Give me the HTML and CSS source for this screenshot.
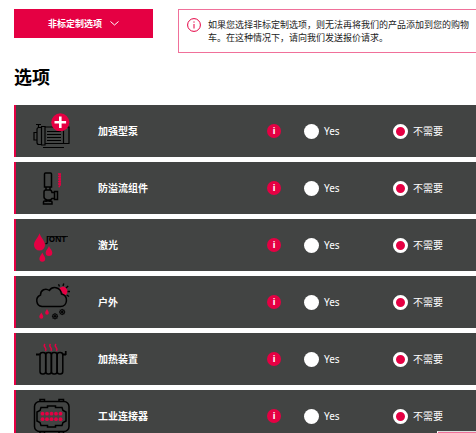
FILE: index.html
```
<!DOCTYPE html>
<html lang="zh-CN">
<head>
  <meta charset="UTF-8">
  <meta name="viewport" content="width=device-width, initial-scale=1.0">
  <title>选项</title>
  <link rel="stylesheet" href="styles.css">
</head>
<body>
  <header class="top">
    <button type="button" class="custom-btn">
      非标定制选项
      <svg class="chevron" viewBox="0 0 9 5"><path d="M.5 .5 L4.5 4 L8.5 .5"/></svg>
    </button>
    <div class="notice">
      <svg class="notice-icon" viewBox="0 0 14 14"><circle cx="7" cy="7" r="6.4"/><path d="M7 6v4.5M7 3.4v1.3"/></svg>
      <p>如果您选择非标定制选项，则无法再将我们的产品添加到您的购物车。在这种情况下，请向我们发送报价请求。</p>
    </div>
  </header>

  <main>
    <h1>选项</h1>
    <form class="options">

      <div class="option">
        <svg class="icon" viewBox="0 0 44 44">
          <path d="M4 23.5h3v7.5h-3zM7 20.5q0-2 2-2h2.5v17H9q-2 0-2-2zM8.5 18.5v-3M6 15.5h5M11.500 17.500h3.500v18.500h-3.500zM15 18h18.500v16.500H15zM33.500 18h5.500v16.500h-5.500zM17 22.500h14M17 25.500h14M17 28.500h14M17 31.500h14M13 38.500h21"/>
          <circle class="red" cx="30.300" cy="13.300" r="9"/>
          <path class="plus" d="M30.300 7.500v11.600M24.500 13.300h11.600"/>
        </svg>
        <span class="name">加强型泵</span>
        <button type="button" class="info" aria-label="加强型泵">i</button>
        <label><input type="radio" name="pump">Yes</label>
        <label><input type="radio" name="pump" checked>不需要</label>
      </div>

      <div class="option">
        <svg class="icon" viewBox="0 0 44 44">
          <path class="bold" d="M14.500 8q0-1 1-1h5q1 0 1 1v13h-7zM16 21v3h4v-3M14 26q0-2 2-2h4q1.500 0 2 2.500h2.500v6H22q-1 1.500-3 1.500h-2q-3-1-3-3zM24.500 25.500h3v8h-3zM16 34v2M20 34v2M13.500 36q0-1 1-1h6.500q1 0 1 1v2h-8.500z"/>
          <path class="red-line" d="M28 8h3M28 10.500h3M28 13h3M28 15.500h3M28 18h3M28.500 20.500h1.500M30 8v12"/>
        </svg>
        <span class="name">防溢流组件</span>
        <button type="button" class="info" aria-label="防溢流组件">i</button>
        <label><input type="radio" name="overflow">Yes</label>
        <label><input type="radio" name="overflow" checked>不需要</label>
      </div>

      <div class="option">
        <svg class="icon" viewBox="0 0 44 44">
          <path class="red" d="M9.500 10.300C11 15 15 18 15 22a5.500 5.500 0 0 1-11 0C4 18 8 15 9.500 10.300zM19 23c1 3 3.300 4.300 3.300 6.800a3.300 3.300 0 0 1-6.600 0C15.700 27.300 18 26 19 23zM12.300 29.500c1 2.700 2.900 4 2.900 6.300a2.900 2.900 0 0 1-5.800 0c0-2.300 1.900-3.600 2.900-6.300z"/>
          <text class="mark" x="16" y="19">JONT</text>
          <path class="thin" d="M17 13.500h21"/>
        </svg>
        <span class="name">激光</span>
        <button type="button" class="info" aria-label="激光">i</button>
        <label><input type="radio" name="laser">Yes</label>
        <label><input type="radio" name="laser" checked>不需要</label>
      </div>

      <div class="option">
        <svg class="icon" viewBox="0 0 44 44">
          <path class="red" d="M29 9a4.500 4.500 0 1 1 5 6.500q-1-3.500-5-6.500z"/>
          <path class="rays" d="M29.500 6.500l-1-2.200M33 6l.8-2.500M36 8l2.200-2M37.500 11.500h2.500M36.700 15l2.300 1.500"/>
          <path class="bold" d="M12 26.500a6 6 0 0 1-1.500-11.500c0-5 5-7.500 9-4.500 2.500-4.500 11-4 12 3.500 7 1.500 6.500 12.500-1 12.500z"/>
          <path class="red" d="M11.300 32.500c.8 2 2 2.600 2 4.300a2 2 0 0 1-4 0c0-1.700 1.200-2.300 2-4.300zM17 29c.8 1.800 1.800 2.400 1.800 3.900a1.800 1.800 0 0 1-3.600 0c0-1.500 1-2.100 1.800-3.900z"/>
          <path class="thin" d="M25 33.200v6.200M21.900 36.300h6.200M22.800 34.100l4.400 4.400M27.200 34.100l-4.400 4.400M32.200 28.900v6.200M29.100 32h6.200M30 29.800l4.400 4.400M34.400 29.800L30 34.200"/>
          <circle class="thin" cx="25" cy="36.300" r="2.500"/>
          <circle class="thin" cx="32.200" cy="32" r="2.500"/>
        </svg>
        <span class="name">户外</span>
        <button type="button" class="info" aria-label="户外">i</button>
        <label><input type="radio" name="outdoor">Yes</label>
        <label><input type="radio" name="outdoor" checked>不需要</label>
      </div>

      <div class="option">
        <svg class="icon" viewBox="0 0 44 44">
          <path class="red-line" d="M15 7q-1.500 1.700 0 3.300t.5 3.500M20.500 7q-1.500 1.700 0 3.300t.5 3.500M26 7q-1.500 1.700 0 3.300t.5 3.500"/>
          <path d="M6 17h4M33 17h2.500v-3M6 18h3.500M33 18h3M36 18v-4"/>
          <g class="bold">
            <rect x="10" y="15.500" width="5.700" height="21.500" rx="2.500"/>
            <rect x="15.700" y="15.500" width="5.700" height="21.500" rx="2.500"/>
            <rect x="21.400" y="15.500" width="5.700" height="21.500" rx="2.500"/>
            <rect x="27.100" y="15.500" width="5.700" height="21.500" rx="2.500"/>
          </g>
        </svg>
        <span class="name">加热装置</span>
        <button type="button" class="info" aria-label="加热装置">i</button>
        <label><input type="radio" name="heater">Yes</label>
        <label><input type="radio" name="heater" checked>不需要</label>
      </div>

      <div class="option">
        <svg class="icon" viewBox="0 0 44 44">
          <rect class="bold" x="4.500" y="7.500" width="34.500" height="30" rx="5"/>
          <path class="bold" d="M10 7.500V5.500h4.500v2M29 7.500V5.500h4.500v2M10 37.500v2h4.500v-2M29 37.500v2h4.500v-2"/>
          <path class="bold" d="M11 13.500h6.500v-1.500h8v1.500H32l1 3 3 1.500v9l-3 1.500-1 3h-6.500V33h-8v-1.500H11l-1-3L7 27v-9l3-1.500z"/>
          <g class="red">
            <circle cx="12.500" cy="19.700" r="1.900"/><circle cx="17" cy="19.700" r="1.900"/><circle cx="21.500" cy="19.700" r="1.900"/><circle cx="26" cy="19.700" r="1.900"/><circle cx="30.500" cy="19.700" r="1.900"/>
            <circle cx="12.500" cy="25.200" r="1.900"/><circle cx="17" cy="25.200" r="1.900"/><circle cx="21.500" cy="25.200" r="1.900"/><circle cx="26" cy="25.200" r="1.900"/><circle cx="30.500" cy="25.200" r="1.900"/>
          </g>
        </svg>
        <span class="name">工业连接器</span>
        <button type="button" class="info" aria-label="工业连接器">i</button>
        <label><input type="radio" name="connector">Yes</label>
        <label><input type="radio" name="connector" checked>不需要</label>
      </div>

    </form>
  </main>

  <div class="corner-tab"></div>
</body>
</html>
```

FILE: styles.css
```
* { box-sizing: border-box; }
body { margin: 0; padding: 9px 0 0 14px; background: #fff; color: #000; font-family: "Noto Sans", "Noto Sans CJK SC", sans-serif; font-size: 9px; }
button { border: 0; padding: 0; font-family: inherit; color: #fff; background: #e50043; cursor: pointer; }

.top { display: flex; align-items: flex-start; gap: 25px; }
.custom-btn { display: flex; flex: 0 0 139px; align-items: center; justify-content: center; gap: 8px; height: 29px; font-size: 9px; font-weight: bold; }
.chevron { width: 9px; height: 5px; fill: none; stroke: #fff; }
.notice { display: flex; flex: 1; gap: 7px; padding: 8px 4px 8px 8px; border: 1px solid #f0709a; border-right: 0; }
.notice p { flex: 1; margin: 0; line-height: 13px; color: #222; }
.notice-icon { flex: none; width: 14px; height: 14px; fill: none; stroke: #e50043; }

h1 { margin: 12px 0 16px; font-size: 18px; line-height: 24px; }

.options { display: flex; flex-direction: column; gap: 5px; }
.option { display: grid; grid-template-columns: 82px 169px 37px 89px 1fr; align-items: center; height: 52px; border-left: 2px solid #e50043; background: #424443; color: #fff; }
.name { font-size: 10px; line-height: 14px; font-weight: bold; }
.info { width: 14px; height: 14px; border-radius: 50%; font-size: 9px; line-height: 14px; font-weight: bold; }
.option label { display: flex; align-items: center; gap: 5px; font-size: 10px; line-height: 14px; }
.option input { appearance: none; width: 15px; height: 15px; margin: 0; border-radius: 50%; background: #fff; }
.option input:checked { border: 3px solid #fff; background: #e50043; }

.icon { width: 44px; height: 44px; margin-left: 14px; fill: none; stroke: #000; stroke-width: 1.2; }
.icon .bold { stroke-width: 1.5; }
.icon .rays { stroke-width: 1.4; }
.icon .thin { stroke-width: 0.8; }
.icon .red { fill: #e50043; stroke: none; }
.icon .red-line { stroke: #e50043; stroke-width: 1.4; }
.icon .plus { stroke: #fff; stroke-width: 2.6; }
.icon .mark { fill: #000; stroke: none; font-size: 8px; font-weight: bold; }

.corner-tab { position: fixed; right: 0; bottom: 0; width: 39px; height: 2px; border-top: 1px solid #ddd; border-left: 1px solid #fff; background: #f0709a; }
```
